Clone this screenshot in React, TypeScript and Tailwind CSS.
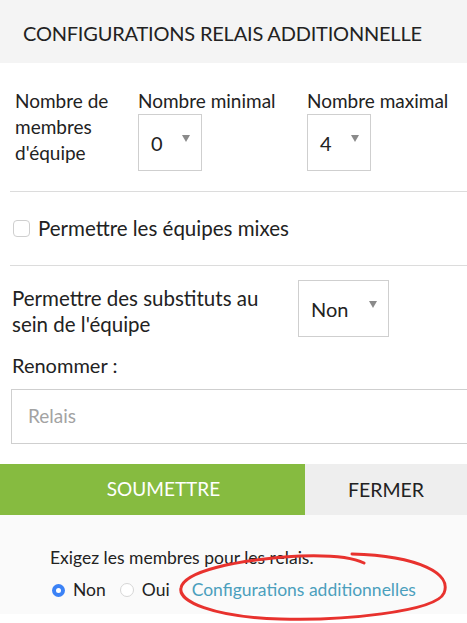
import React from "react";

function SelectBox({ value, width }: { value: string; width: string }) {
	return (
		<div
			className={`relative h-[57px] ${width} border border-[#cfcfcf] bg-white flex items-center pl-[12px] text-[20px] text-[#222]`}
		>
			<span className="mt-[1px]">{value}</span>
			<span className="absolute right-[11px] top-[20px] w-0 h-0 border-l-[4px] border-r-[4px] border-t-[7px] border-l-transparent border-r-transparent border-t-[#8a8a8a]" />
		</div>
	);
}

export default function App() {
	return (
		<div
			className="relative w-[467px] h-[623px] overflow-hidden bg-white text-[#222]"
			style={{ fontFamily: "Lato, 'Open Sans', sans-serif" }}
		>
			<header className="h-[63px] bg-[#f4f4f4] flex items-center pl-[23px]">
				<h1 className="text-[20px] tracking-[-0.2px] text-[#222] mt-[2px]">
					CONFIGURATIONS RELAIS ADDITIONNELLE
				</h1>
			</header>

			<div className="pl-[15px] pt-[25px] pb-[20px] flex text-[19px] leading-[26px]">
				<div className="w-[123px]">
					Nombre de
					<br />
					membres
					<br />
					d'équipe
				</div>
				<div className="w-[169px]">
					<div>Nombre minimal</div>
					<SelectBox value="0" width="w-[64px]" />
				</div>
				<div>
					<div>Nombre maximal</div>
					<SelectBox value="4" width="w-[64px]" />
				</div>
			</div>

			<div className="ml-[10px] border-t border-[#dcdcdc]" />

			<label className="flex items-center h-[73px] pl-[13px] text-[20.5px]">
				<span className="w-[17px] h-[17px] rounded-[4px] border border-[#cfcfcf] bg-white mr-[8px]" />
				Permettre les équipes mixes
			</label>

			<div className="ml-[10px] border-t border-[#dcdcdc]" />

			<div className="flex pl-[12px] pt-[14px] text-[20.5px] leading-[26px]">
				<div className="w-[286px] pt-[5px]">
					Permettre des substituts au
					<br />
					sein de l'équipe
				</div>
				<SelectBox value="Non" width="w-[91px]" />
			</div>

			<div className="pl-[12px] pt-[15px] text-[20px] leading-[26px]">Renommer :</div>

			<div className="ml-[11px] mt-[11px] h-[55px] border border-r-0 border-[#cfcfcf] flex items-center pl-[16px] text-[19px] text-[#a3a3a3]">
				Relais
			</div>

			<div className="mt-[20px] flex h-[51px] text-[19.5px]">
				<button className="w-[305px] bg-[#86bb40] text-white text-[19px] pl-[22px]">SOUMETTRE</button>
				<button className="flex-1 bg-[#eeeeee] text-[#222]">FERMER</button>
			</div>

			<div className="h-[99px] bg-[#fafafa] pl-[50px] pt-[27px] text-[17.5px] leading-[32px]">
				<div>Exigez les membres pour les relais.</div>
				<div className="flex items-center">
					<span className="w-[13px] h-[13px] rounded-full bg-[#3b82f6] flex items-center justify-center mr-[8px] ml-[2px]">
						<span className="w-[5px] h-[5px] rounded-full bg-white" />
					</span>
					<span className="mr-[14px]">Non</span>
					<span className="w-[14px] h-[14px] rounded-full border border-[#d6d6d6] bg-white mr-[8px]" />
					<span className="mr-[22px]">Oui</span>
					<a className="text-[#4b9fbd]">Configurations additionnelles</a>
				</div>
			</div>

			<svg
				className="absolute left-0 top-0 pointer-events-none"
				width="467"
				height="623"
				viewBox="0 0 467 623"
			>
				<path
					d="M352 554 C 420 556, 452 574, 444 593 C 436 612, 340 621, 280 619 C 212 617, 178 601, 181 588 C 184 572, 232 560, 300 556 C 330 555, 352 557, 364 563"
					fill="none"
					stroke="#e8322e"
					strokeWidth="3"
					strokeLinecap="round"
				/>
			</svg>
		</div>
	);
}
